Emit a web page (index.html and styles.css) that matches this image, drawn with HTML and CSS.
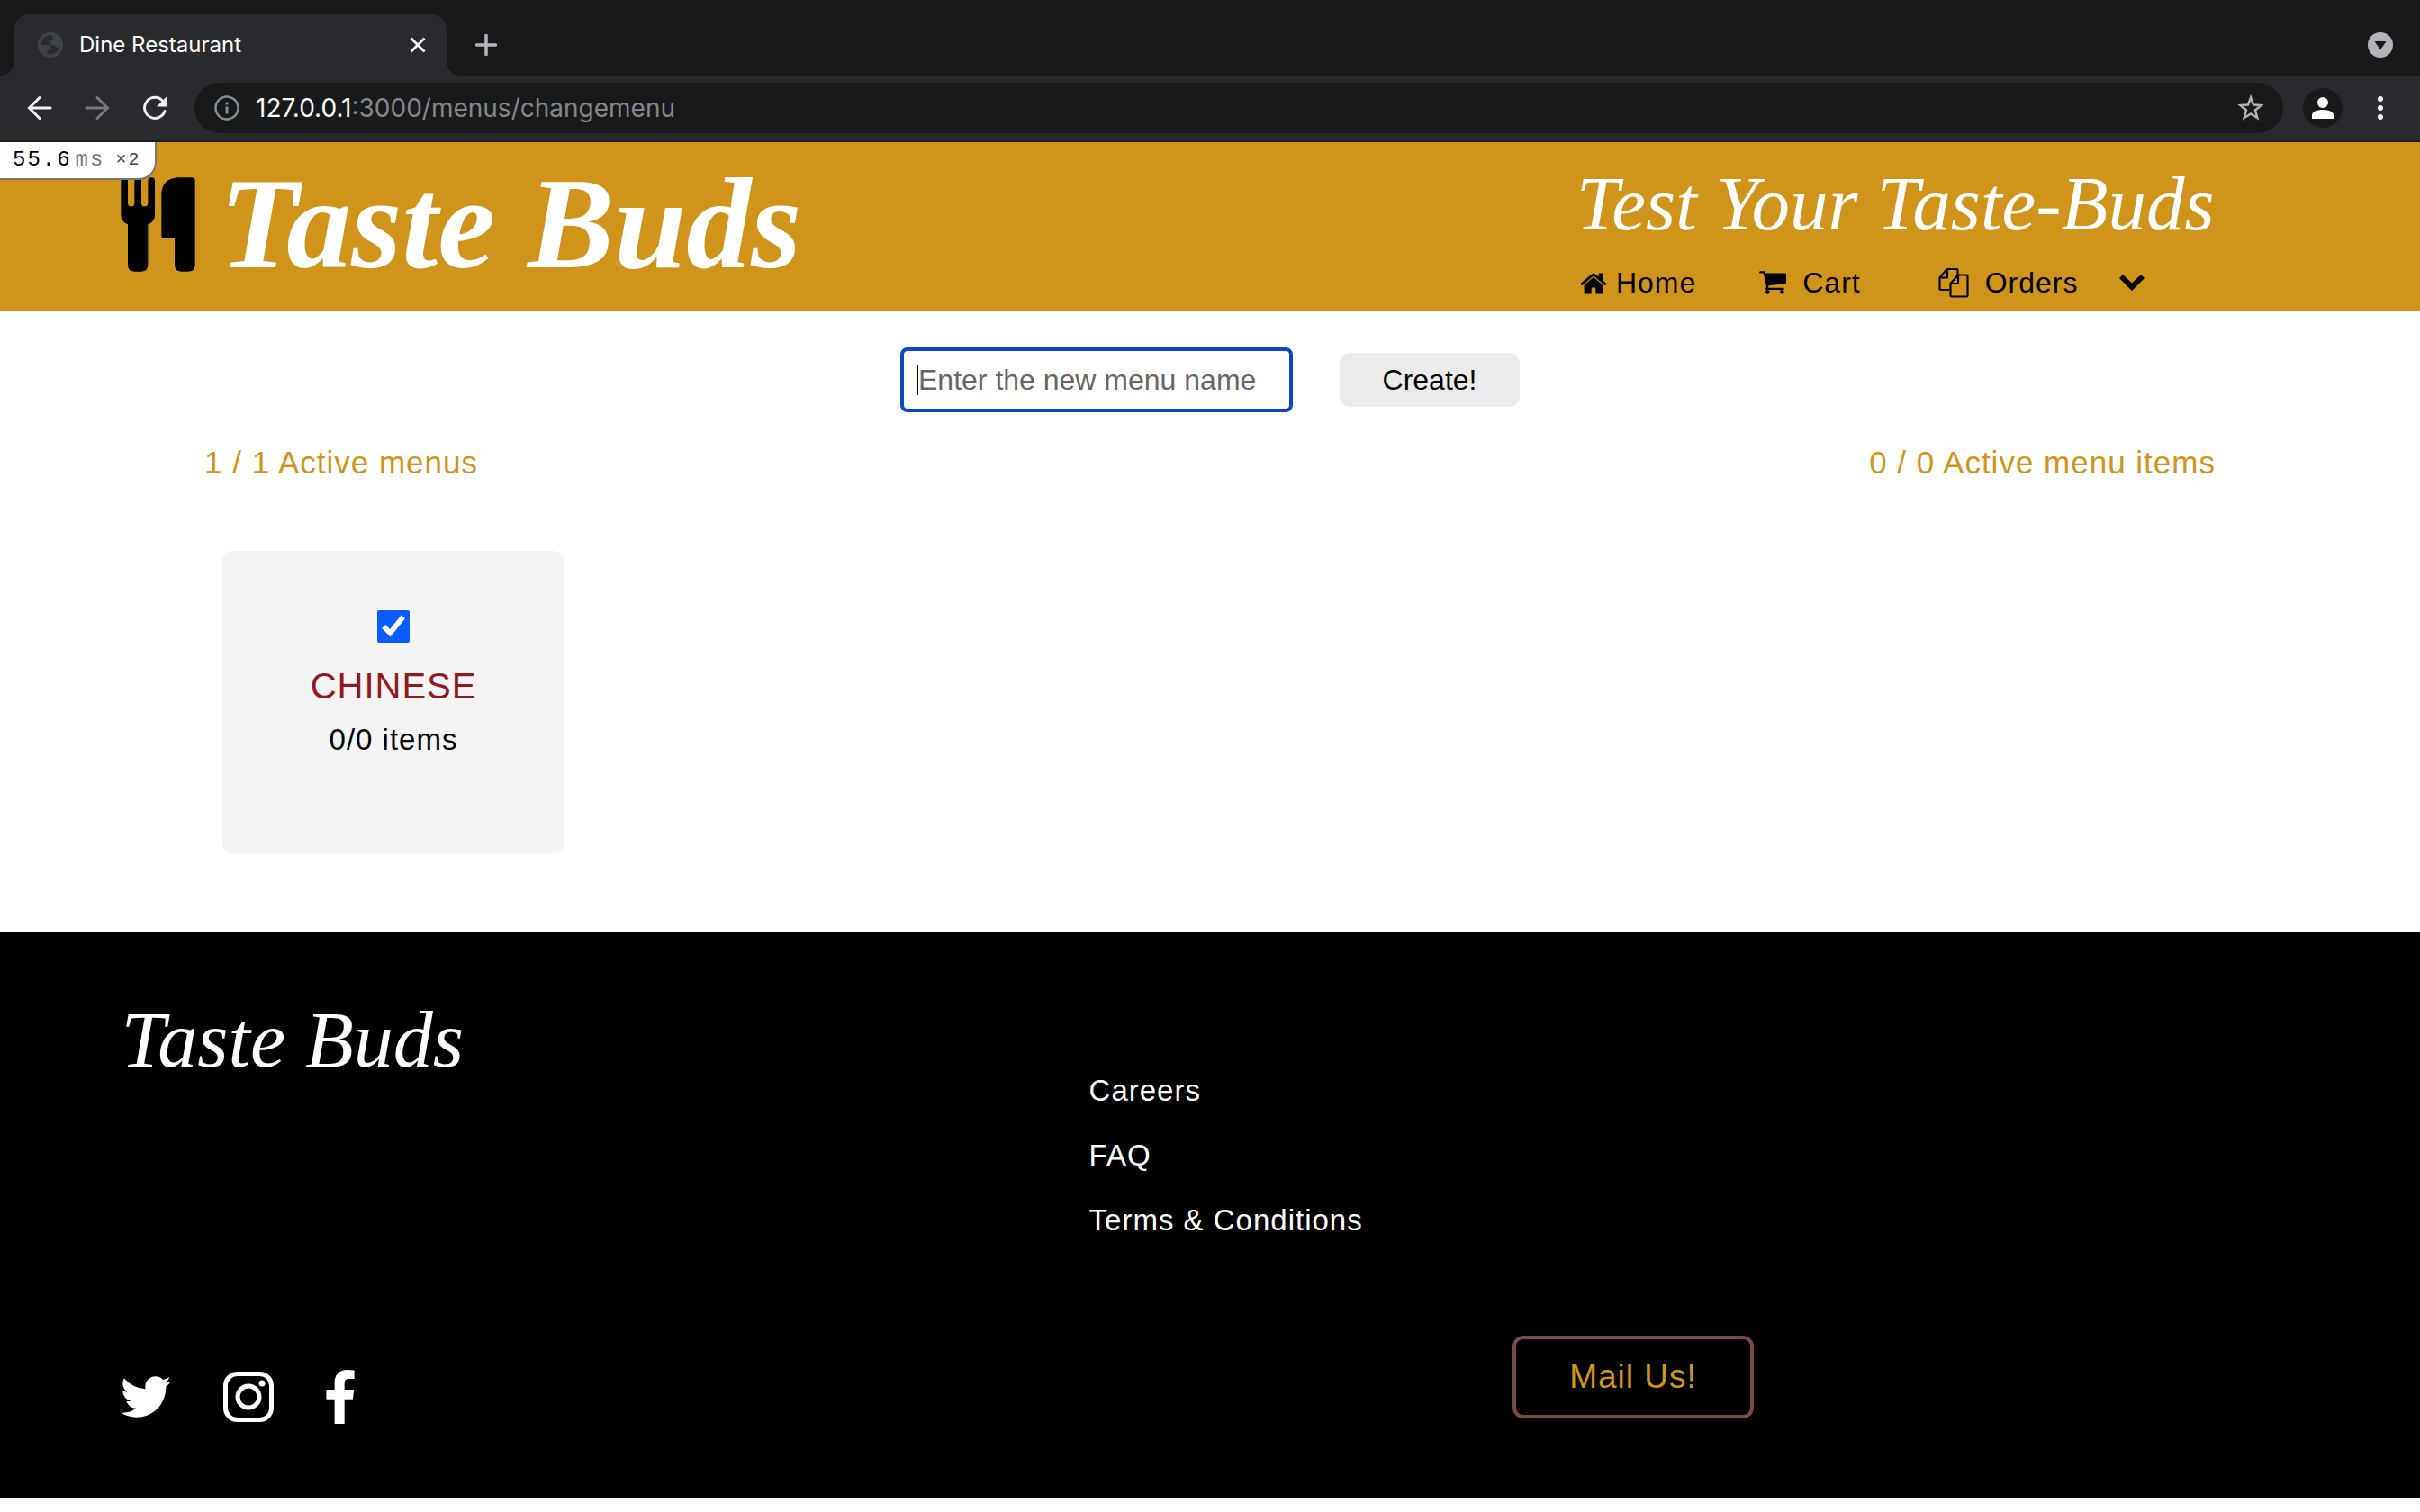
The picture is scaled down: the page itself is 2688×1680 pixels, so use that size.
FILE: index.html
```html
<!DOCTYPE html>
<html lang="en">
<head>
<meta charset="utf-8">
<title>Dine Restaurant</title>
<link rel="stylesheet" href="styles.css">
</head>
<body>
<div class="browser">
  <div class="tabstrip">
    <div class="tab">
      <svg class="tab-icon" viewBox="0 0 28 28" width="28" height="28" aria-hidden="true"><circle cx="14" cy="14" r="14" fill="#3f4246"/><path d="M16 3.500C10 2.500 4 7 3.500 14H10c2.500 0 3.500 1.500 3.500 3.500H16c1 0 1 1.500 0 2h-5.500v4.500c6 2 13-1.500 14-9-1 1.500-3.500 2-5 .500l-1.500-1.500h-3c-1.500 0-2.500-1-2.500-2.500s1-2.500 2.500-2.500H17z" fill="#292a2d"/></svg>
      <span class="tab-title">Dine Restaurant</span>
      <button class="icon-btn" aria-label="Close tab"><svg viewBox="0 0 18 18" width="18" height="18"><path d="M1.500 1.500l15 15M16.500 1.500l-15 15" stroke="#fff" stroke-width="2.800"/></svg></button>
    </div>
    <button class="icon-btn new-tab" aria-label="New tab"><svg viewBox="0 0 24 24" width="24" height="24"><path d="M12 1.500v21M1.500 12h21" stroke="#b4b6bc" stroke-width="3.500" stroke-linecap="round"/></svg></button>
    <button class="icon-btn tab-search" aria-label="Search tabs"><svg viewBox="0 0 28 28" width="28" height="28"><circle cx="14" cy="14" r="14" fill="#b2b4ba"/><path d="M7.500 10h13L14 19.500z" fill="#18191b"/></svg></button>
  </div>
  <div class="toolbar">
    <button class="icon-btn" aria-label="Back"><svg viewBox="0 0 28 28" width="28" height="28"><path d="M26 14H3M14 2.500L2.500 14 14 25.500" fill="none" stroke="#f1f2f4" stroke-width="3" stroke-linecap="round"/></svg></button>
    <button class="icon-btn" aria-label="Forward"><svg viewBox="0 0 28 28" width="28" height="28"><path d="M2 14h23M14 2.500L25.500 14 14 25.500" fill="none" stroke="#77797c" stroke-width="3" stroke-linecap="round"/></svg></button>
    <button class="icon-btn" aria-label="Reload"><svg viewBox="0 0 28 28" width="28" height="28"><path d="M25 17.500A11.500 11.500 0 1 1 22.500 6" fill="none" stroke="#f1f2f4" stroke-width="3" stroke-linecap="round"/><path d="M27.500 1v11.500H16z" fill="#f1f2f4"/></svg></button>
    <div class="address">
      <svg viewBox="0 0 28 28" width="28" height="28" aria-hidden="true"><circle cx="14" cy="14" r="12.500" fill="none" stroke="#868d95" stroke-width="2.500"/><path d="M14 12.500v8M14 7.500v3" stroke="#868d95" stroke-width="3"/></svg>
      <span class="url"><span class="host">127.0.0.1</span>:3000/menus/changemenu</span>
      <svg viewBox="0 0 30 30" width="30" height="30" aria-hidden="true"><path d="M15 3.500l3 8 8.500.500-6.500 5.500 2.200 8.500L15 21.500 7.800 26 10 17.500 3.500 12l8.500-.500z" fill="none" stroke="#b0b0b0" stroke-width="2.600"/></svg>
    </div>
    <button class="icon-btn avatar" aria-label="Profile"><svg viewBox="0 0 44 44" width="44" height="44"><circle cx="22" cy="22" r="22" fill="#18191b"/><circle cx="22" cy="16" r="6" fill="#fff"/><path d="M10 34v-4c0-4 6-6 12-6s12 2 12 6v4z" fill="#fff"/></svg></button>
    <button class="icon-btn" aria-label="More"><svg viewBox="0 0 8 28" width="8" height="28"><g fill="#f1f2f4"><circle cx="4" cy="4" r="3"/><circle cx="4" cy="14" r="3"/><circle cx="4" cy="24" r="3"/></g></svg></button>
  </div>
</div>

<div class="page">
  <div class="profiler"><b class="profiler-time">55.6</b><span class="profiler-unit">ms</span><span class="profiler-count">×2</span></div>
  <header class="site-header">
    <a class="brand" href="#">
      <svg viewBox="402 139 249 315" width="83" height="105" aria-hidden="true"><path d="M403 152q0-12 12-12 11 0 11 12v73q0 11 11 11t11-11v-73q0-12 12-12t11 12v73q0 11 11 11t11-11v-73q0-12 12-12t11 12v113q0 22-23 31v135q0 22-22 22h-24q-21 0-21-22V296q-23-9-23-31zM538 196q2-54 56-56h46q10 0 10 10v281q0 22-22 22h-24q-22 0-22-22v-90h-36q-8 0-8-8z"/></svg>
      <h1 class="brand-name">Taste Buds</h1>
    </a>
    <div class="header-side">
      <p class="tagline">Test Your Taste-Buds</p>
      <nav class="nav">
        <a class="nav-link nav-home" href="#"><svg viewBox="64 180 1664 1376" width="30" height="25" aria-hidden="true"><path d="M1472 992v480q0 26-19 45t-45 19h-384v-384h-256v384h-384q-26 0-45-19t-19-45v-480q0-1 .5-3t.5-3l575-474 575 474q1 2 1 6zm223-69l-62 74q-8 9-21 11h-3q-13 0-21-7l-692-577-692 577q-12 8-24 7-13-2-21-11l-62-74q-8-10-7-23.500t11-21.500l719-599q32-26 76-26t76 26l244 204v-195q0-14 9-23t23-9h192q14 0 23 9t9 23v408l219 182q10 8 11 21.500t-7 23.500z"/></svg>Home</a>
        <a class="nav-link nav-cart" href="#"><svg viewBox="64 256 1664 1408" width="30" height="26" aria-hidden="true"><path d="M704 1536q0 52-38 90t-90 38-90-38-38-90 38-90 90-38 90 38 38 90zm896 0q0 52-38 90t-90 38-90-38-38-90 38-90 90-38 90 38 38 90zm128-1088v512q0 24-16.500 42.500t-40.500 21.500l-1044 122q13 60 13 70 0 16-24 64h920q26 0 45 19t19 45-19 45-45 19h-1024q-26 0-45-19t-19-45q0-11 8-31.500t16-36 21.500-40 15.500-29.500l-177-823h-204q-26 0-45-19t-19-45 19-45 45-19h256q16 0 28.500 6.500t19.500 15.500 13 24.500 8 26 5.500 29.500 4.500 26h1201q26 0 45 19t19 45z"/></svg>Cart</a>
        <a class="nav-link nav-orders" href="#"><svg viewBox="0 0 34 34" width="34" height="34" aria-hidden="true"><g fill="none" stroke="#000" stroke-width="2.200" stroke-linejoin="round"><path d="M12 25H2.500q-1 0-1-1V11.500l8-9.500h11q1 0 1 1v6M1.500 11.500h8.500V2"/><path d="M13.500 18v13.500q0 1 1 1h17q1 0 1-1V9.500q0-1-1-1H22zM13.500 18h8.500V8.500"/></g></svg>Orders</a>
        <button class="icon-btn nav-more" aria-label="More pages"><svg viewBox="0 0 30 20" width="30" height="20"><path d="M1 5l4-4 10 9.500L25 1l4 4-14 14z"/></svg></button>
      </nav>
    </div>
  </header>

  <main class="main">
    <form class="create-form">
      <input class="name-input" type="text" placeholder="Enter the new menu name" aria-label="New menu name">
      <button class="create-btn" type="submit">Create!</button>
    </form>
    <div class="stats"><p>1 / 1 Active menus</p><p>0 / 0 Active menu items</p></div>
    <article class="menu-card">
      <input class="menu-check" type="checkbox" id="menu-chinese" checked>
      <label class="menu-name" for="menu-chinese">CHINESE</label>
      <p class="menu-items">0/0 items</p>
    </article>
  </main>

  <footer class="footer">
    <a class="footer-brand" href="#">Taste Buds</a>
    <nav class="footer-links">
      <a href="#">Careers</a>
      <a href="#">FAQ</a>
      <a href="#">Terms &amp; Conditions</a>
    </nav>
    <div class="social">
      <a href="#" aria-label="Twitter"><svg viewBox="108 256 1576 1280" width="56" height="46"><path fill="#fff" d="M1684 408q-67 98-162 167 1 14 1 42 0 130-38 259.500t-115.500 248.500-184.500 210.500-258 146-323 54.500q-271 0-496-145 35 4 78 4 225 0 401-138-105-2-188-64.500t-114-159.500q33 5 61 5 43 0 85-11-112-23-185.500-111.500t-73.500-205.500v-4q68 38 146 41-66-44-105-115t-39-154q0-88 44-163 121 149 294.500 238.500t371.500 99.500q-8-38-8-74 0-134 94.500-228.500t228.500-94.500q140 0 236 102 109-21 205-78-37 115-142 178 93-10 186-50z"/></svg></a>
      <a href="#" aria-label="Instagram"><svg viewBox="0 0 56 56" width="56" height="56"><g fill="none" stroke="#fff" stroke-width="5"><rect x="2.500" y="2.500" width="51" height="51" rx="13"/><circle cx="28" cy="28" r="12"/></g><circle cx="43" cy="13" r="3.500" fill="#fff"/></svg></a>
      <a href="#" aria-label="Facebook"><svg viewBox="479 0 864 1664" width="32" height="60"><path fill="#fff" d="M1343 12v264h-157q-86 0-116 36t-30 108v189h293l-39 296h-254v759h-306v-759h-255v-296h255v-218q0-186 104-288.500t277-102.500q147 0 228 12z"/></svg></a>
    </div>
    <button class="mail-btn" type="button">Mail Us!</button>
  </footer>
</div>
</body>
</html>
```
FILE: styles.css
```css
* { box-sizing: border-box; }
body { margin: 0; background: #fff; color: #000; font: 32px/40px "Liberation Sans", Arial, sans-serif; }
p, h1 { margin: 0; }
a { color: inherit; text-decoration: none; }
svg { display: block; flex: none; }
button { font: inherit; border: 0; cursor: pointer; }
.icon-btn { background: none; padding: 0; flex: none; }

/* browser window */
.browser { background: #292a2d; border-bottom: 2px solid #1b1c1e; font-family: Inter, sans-serif; color: #fff; }
.tabstrip { display: flex; align-items: center; height: 84px; background: #18191b; padding: 16px 30px 0 16px; }
.tab { position: relative; display: flex; align-items: center; gap: 18px; width: 480px; height: 68px; background: #292a2d; border-radius: 16px 16px 0 0; padding: 0 23px 0 26px; }
.tab::before, .tab::after { content: ""; position: absolute; bottom: 0; width: 16px; height: 16px; }
.tab::before { left: -16px; background: radial-gradient(circle at 0 0, #18191b 16px, #292a2d 16px); }
.tab::after { right: -16px; background: radial-gradient(circle at 100% 0, #18191b 16px, #292a2d 16px); }
.tab-title { flex: 1; font-size: 24px; line-height: 32px; }
.new-tab { margin-left: 32px; }
.tab-search { margin-left: auto; }
.toolbar { display: flex; align-items: center; gap: 36px; height: 72px; padding: 0 40px 0 30px; }
.address { display: flex; flex: 1; align-items: center; gap: 18px; height: 56px; margin-left: -6px; border-radius: 28px; background: #18191b; padding: 0 21px 0 22px; }
.url { flex: 1; font-size: 28px; line-height: 36px; color: #85878a; }
.host { color: #fff; }
.avatar { margin: 0 2px 0 -14px; }

/* request timing badge */
.page { position: relative; }
.profiler { position: absolute; top: 0; left: 0; display: flex; align-items: center; height: 42px; padding: 0 16px 0 14px; background: #fff; border: solid #777; border-width: 0 2px 2px 0; border-radius: 0 0 20px 0; font: 24px/32px "Liberation Mono", monospace; letter-spacing: 2px; }
.profiler-time { font-weight: 400; }
.profiler-unit { margin-left: 4px; color: #777; }
.profiler-count { margin-left: 12px; font-size: 20px; color: #444; }

.site-header { display: flex; justify-content: space-between; height: 188px; padding: 0 8.5% 0 5%; background: #d0941a; }
.brand { display: flex; align-items: center; gap: 26px; padding-bottom: 6px; }
.brand-name { font: italic bold 144px/160px "Liberation Serif", serif; color: #fff; white-space: nowrap; }
.header-side { display: flex; flex-direction: column; justify-content: space-between; padding: 20px 0 8px; }
.tagline { font: italic 85px/96px "Liberation Serif", serif; color: #fff; white-space: nowrap; }
.nav { display: flex; align-items: center; height: 48px; padding-left: 4px; letter-spacing: 1px; }
.nav-link { display: flex; align-items: center; }
.nav-home { gap: 10px; margin-right: 70px; }
.nav-cart { gap: 18px; margin-right: 86px; }
.nav-orders { gap: 18px; margin-right: 44px; }

.main { padding: 40px 8% 88px; }
.create-form { display: flex; justify-content: center; align-items: center; gap: 52px; }
.name-input { width: 436px; height: 72px; padding: 0 16px; border: 4px solid #0848c4; border-radius: 8px; outline: 0; background: linear-gradient(#000, #000) 14px 50% / 2px 34px no-repeat #fff; font: inherit; color: #000; }
.name-input::placeholder { color: #666; opacity: 1; }
.create-btn { width: 200px; height: 60px; border-radius: 12px; background: #ebebeb; color: #000; }
.stats { display: flex; justify-content: space-between; margin-top: 36px; padding: 0 12px; font-size: 35px; color: #d0941a; letter-spacing: 1px; }
.menu-card { display: flex; flex-direction: column; align-items: center; width: 380px; height: 336px; margin: 78px 0 0 32px; padding-top: 66px; border-radius: 12px; background: #f4f4f4; }
.menu-check { width: 36px; height: 36px; margin: 0; accent-color: #0a5cff; }
.menu-name { margin-top: 24px; font-size: 40px; line-height: 48px; letter-spacing: 1px; color: #92181f; }
.menu-items { margin-top: 16px; font-size: 33px; letter-spacing: 1px; }

.footer { display: grid; grid-template-columns: 80fr 35fr 75fr; padding: 64px 0 82px 5%; background: #000; color: #fff; letter-spacing: 1px; }
.footer-brand { font: italic 88px/112px "Liberation Serif", serif; letter-spacing: 0; }
.footer-links { display: flex; flex-direction: column; align-items: flex-start; grid-column: 2 / 4; gap: 32px; padding-top: 92px; font-size: 33px; }
.social { display: flex; align-items: center; gap: 58px; grid-column: 1 / 3; margin-top: 146px; }
.mail-btn { width: 268px; height: 92px; margin-top: 108px; border: 4px solid #7a4a44; border-radius: 12px; background: none; color: #d0941a; font-size: 37px; letter-spacing: 1px; }
```
